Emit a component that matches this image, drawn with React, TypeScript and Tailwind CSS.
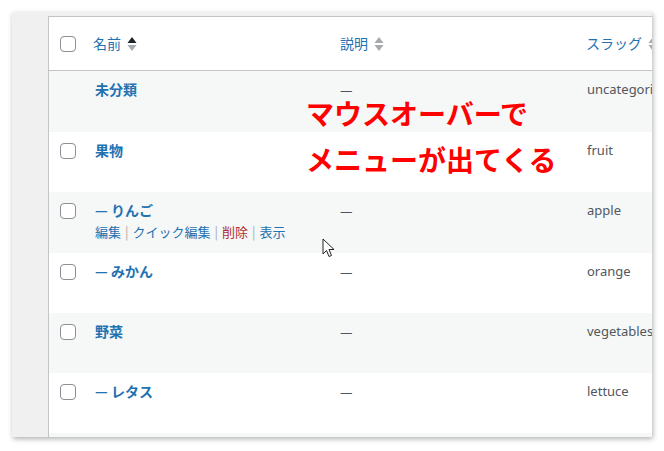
const jp = "font-['Noto_Sans_CJK_JP','Noto_Sans',sans-serif]";

const Checkbox = () => (
  <span className="block w-4 h-4 rounded-[4px] border border-[#8c8f94] bg-white" />
);

const SortIcon = ({ active = false }: { active?: boolean }) => (
  <svg width="10" height="16" viewBox="0 0 10 16" className="ml-[6px]">
    <path d="M5 1 L9.5 7 L0.5 7 Z" fill={active ? "#1d2327" : "#a7aaad"} />
    <path d="M5 15 L9.5 9 L0.5 9 Z" fill="#a7aaad" />
  </svg>
);

const Cursor = () => (
  <svg width="14" height="21" viewBox="0 0 14 21">
    <path
      d="M1 1 L1 16 L4.5 12.5 L7 18.5 L9.5 17.5 L7 11.5 L12 11.5 Z"
      fill="#fff"
      stroke="#222"
      strokeWidth="1"
      strokeLinejoin="round"
    />
  </svg>
);

const Sep = () => <span className="text-[#a7aaad] mx-[4px]">|</span>;

type Row = {
  name: string;
  desc: string;
  slug: string;
  check: boolean;
  h: string;
  actions?: boolean;
};

const rows: Row[] = [
  { name: "未分類", desc: "—", slug: "uncategorized", check: false, h: "h-[61px]" },
  { name: "果物", desc: "", slug: "fruit", check: true, h: "h-[60px]" },
  { name: "— りんご", desc: "—", slug: "apple", check: true, h: "h-[61px]", actions: true },
  { name: "— みかん", desc: "—", slug: "orange", check: true, h: "h-[60px]" },
  { name: "野菜", desc: "—", slug: "vegetables", check: true, h: "h-[60px]" },
  { name: "— レタス", desc: "—", slug: "lettuce", check: true, h: "h-[60px]" },
];

export default function App() {
  return (
    <div className={`relative w-[664px] h-[451px] bg-white overflow-hidden ${jp}`}>
      <div className="absolute left-[12px] top-[12px] w-[640px] h-[425px] bg-[#f0f0f1] shadow-[1px_2px_5px_rgba(0,0,0,0.3)] pl-[36px] pt-[4px] overflow-hidden">
        <div className="h-full bg-[#f6f7f7] border-l border-t border-[#c3c4c7] overflow-hidden">
          {/* header */}
          <div className="grid grid-cols-[36px_245px_247px_1fr] h-[54px] items-center bg-white border-b border-[#c3c4c7] text-[14px] text-[#2271b1]">
            <div className="pl-[11px] pt-[1px]">
              <Checkbox />
            </div>
            <div className="pl-[8px] flex items-center">
              名前
              <SortIcon active />
            </div>
            <div className="pl-[10px] flex items-center">
              説明
              <SortIcon />
            </div>
            <div className="pl-[9px] flex items-center whitespace-nowrap">
              スラッグ
              <SortIcon />
            </div>
          </div>
          {rows.map((r, i) => (
            <div
              key={r.slug}
              className={`grid grid-cols-[36px_245px_247px_1fr] ${r.h} ${
                i % 2 === 0 ? "bg-[#f6f7f7]" : "bg-white"
              }`}
            >
              <div className="pl-[11px] pt-[11px]">{r.check && <Checkbox />}</div>
              <div className="pl-[10px] pt-[8px]">
                <div className="text-[14px] leading-[21px] font-semibold text-[#2271b1]">
                  {r.name}
                </div>
                {r.actions && (
                  <div className="text-[13px] leading-[21px] text-[#2271b1] whitespace-nowrap">
                    編集<Sep />クイック編集<Sep />
                    <span className="text-[#b32d2e]">削除</span>
                    <Sep />表示
                  </div>
                )}
              </div>
              <div className="pl-[10px] pt-[8px] text-[14px] leading-[21px] text-[#50575e]">
                {r.desc}
              </div>
              <div className="pl-[10px] pt-[8px] text-[13px] leading-[21px] text-[#50575e] whitespace-nowrap font-['Noto_Sans',sans-serif]">
                {r.slug}
              </div>
            </div>
          ))}
        </div>
      </div>

      {/* annotation */}
      <div className="absolute left-[306px] top-[90px] text-[28px] leading-[46px] font-bold text-[#ff0000] whitespace-nowrap">
        <div>マウスオーバーで</div>
        <div>メニューが出てくる</div>
      </div>

      <div className="absolute left-[322px] top-[238px]">
        <Cursor />
      </div>
    </div>
  );
}
